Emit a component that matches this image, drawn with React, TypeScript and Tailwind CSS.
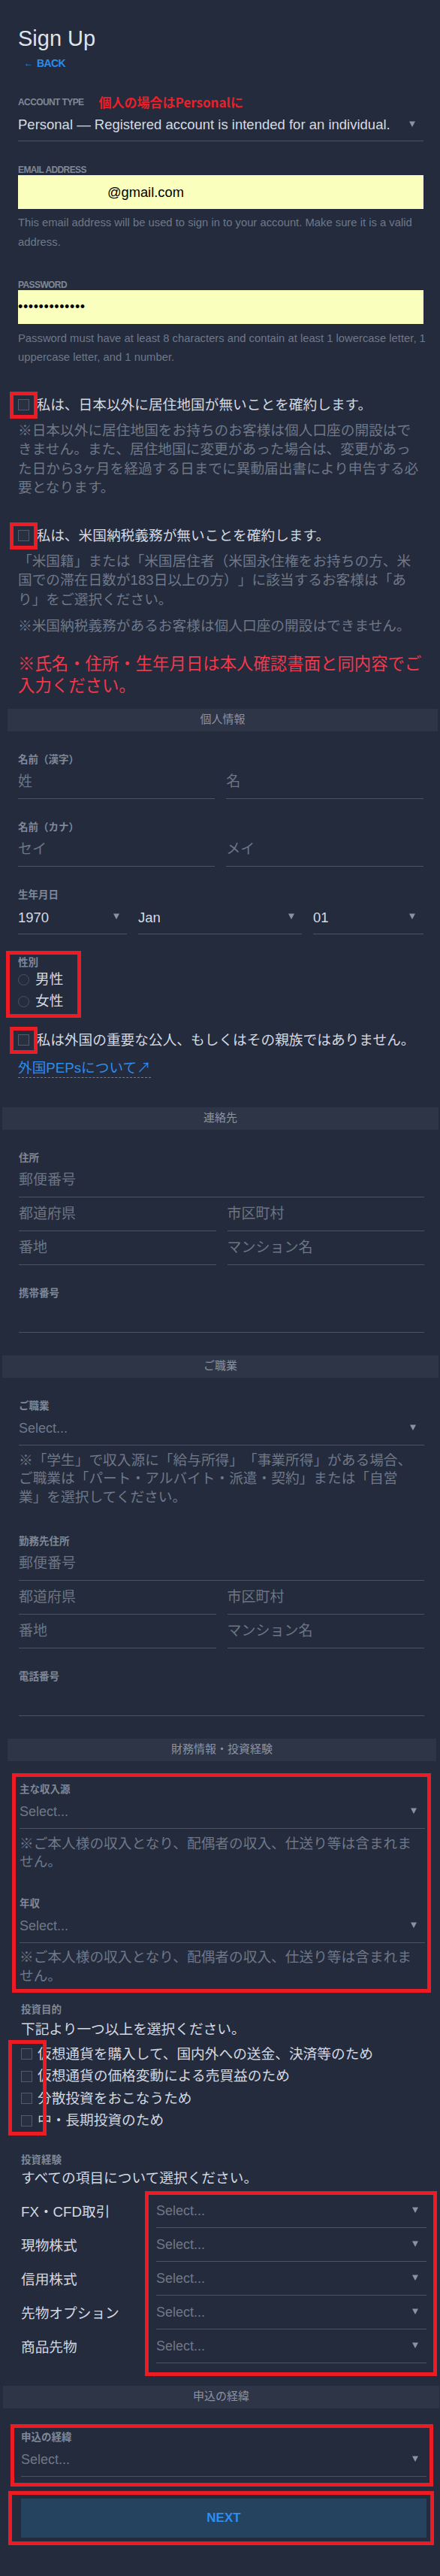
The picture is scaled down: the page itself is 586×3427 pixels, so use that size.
import React from 'react';

// caret used by every select
function Caret() {
  return (
    <svg width="8" height="8" viewBox="0 0 8 8" className="mb-[3px] shrink-0">
      <path d="M0 0.5H8L4 8Z" fill="#8a93a3" />
    </svg>
  );
}

function Label({ children, className = '' }: { children: React.ReactNode; className?: string }) {
  return <div className={`h-4 leading-4 text-[13.5px] font-bold text-[#7f8898] ${className}`}>{children}</div>;
}

function Line({ children, className = '' }: { children?: React.ReactNode; className?: string }) {
  return (
    <div className={`h-10 flex items-center justify-between border-b border-[#4a5263] pb-[3px] ${className}`}>
      {children}
    </div>
  );
}

function Ph({ children }: { children: React.ReactNode }) {
  return <span className="text-[19px] text-[#6c7585]">{children}</span>;
}

function Select({ value, className = 'pr-[11px]' }: { value?: string; className?: string }) {
  return (
    <Line className={className}>
      <span className={value ? 'text-[18.5px] text-[#d6dbe3] whitespace-nowrap' : 'text-[18px] text-[#6f7889]'}>
        {value ?? 'Select...'}
      </span>
      <Caret />
    </Line>
  );
}

function Box({ marked }: { marked?: boolean }) {
  return (
    <span className="relative w-[15px] h-[15px] shrink-0 border border-[#535b6b] bg-[#283041]">
      {marked && (
        <span className="absolute -left-[12px] -top-[11px] w-[37px] h-[36px] border-[5px] border-[#ed1c24]" />
      )}
    </span>
  );
}

function CheckRow({ children, className = '' }: { children: React.ReactNode; className?: string }) {
  return (
    <div className={`h-[26px] flex items-center ${className}`}>
      <Box marked />
      <span className="ml-[9.5px] text-[18.7px] leading-[26px] text-[#d4d9e1] whitespace-nowrap">{children}</span>
    </div>
  );
}

function Radio({ children }: { children: React.ReactNode }) {
  return (
    <div className="h-[29px] flex items-center">
      <span className="w-[15px] h-[15px] rounded-full border-[1.5px] border-[#4b5363] bg-[#252d3d]" />
      <span className="ml-[8px] text-[18.7px] text-[#d4d9e1]">{children}</span>
    </div>
  );
}

function Bar({ children, className = '' }: { children: React.ReactNode; className?: string }) {
  return (
    <div className={`h-[30px] flex items-center justify-center bg-[#2d3546] text-[15px] text-[#8a93a3] ${className}`}>
      {children}
    </div>
  );
}

function Address() {
  return (
    <>
      <Line className="mt-[4px]">
        <Ph>郵便番号</Ph>
      </Line>
      <div className="mt-[5px] grid grid-cols-2 gap-x-[15px]">
        <Line><Ph>都道府県</Ph></Line>
        <Line><Ph>市区町村</Ph></Line>
      </div>
      <div className="mt-[5px] grid grid-cols-2 gap-x-[15px]">
        <Line><Ph>番地</Ph></Line>
        <Line><Ph>マンション名</Ph></Line>
      </div>
    </>
  );
}

const experience = ['FX・CFD取引', '現物株式', '信用株式', '先物オプション', '商品先物'];

const purposes = [
  '仮想通貨を購入して、国内外への送金、決済等のため',
  '仮想通貨の価格変動による売買益のため',
  '分散投資をおこなうため',
  '中・長期投資のため',
];

export default function App() {
  return (
    <div className="w-full h-[3427px] overflow-hidden bg-[#232b3c] flex flex-col pt-[33px] font-['Liberation_Sans','Noto_Sans_CJK_JP',sans-serif] [text-spacing-trim:space-all]">
      {/* account */}
      <section className="flex flex-col pl-[24px] pr-[22.5px]">
        <h1 className="h-[36px] leading-[36px] text-[29px] text-[#dfe3ea]">Sign Up</h1>
        <div className="mt-[5px] h-[20px] flex items-center pl-[8px] text-[#2d8ceb]">
          <span className="text-[12px]">←</span>
          <span className="ml-[5px] text-[14px] font-bold tracking-[-0.6px]">BACK</span>
        </div>

        <div className="mt-[30px] h-[24px] flex items-center gap-[20px]">
          <span className="text-[12px] font-bold tracking-[-0.6px] text-[#7f8898]">ACCOUNT TYPE</span>
          <span className="text-[17px] font-bold text-[#e8202a] font-['Noto_Sans_CJK_JP',sans-serif]">
            個人の場合はPersonalに
          </span>
        </div>
        <Select value="Personal — Registered account is intended for an individual." />

        <div className="mt-[31px] h-[14px] leading-[14px] text-[12px] font-bold tracking-[-0.6px] text-[#7f8898]">
          EMAIL ADDRESS
        </div>
        <div className="h-[45px] flex items-center pl-[119px] bg-[#faffbd] text-[18.3px] text-black">@gmail.com</div>
        <p className="mt-[6px] text-[14.8px] leading-[25.5px] text-[#6f7889] whitespace-nowrap">
          This email address will be used to sign in to your account. Make sure it is a valid
          <br />
          address.
        </p>

        <div className="mt-[38px] h-[13px] leading-[13px] text-[12px] font-bold tracking-[-0.6px] text-[#7f8898]">
          PASSWORD
        </div>
        <div className="h-[45px] flex items-center bg-[#faffbd] text-[18px] tracking-[0.6px] text-black">
          •••••••••••••
        </div>
        <p className="mt-[6.5px] text-[14.8px] leading-[25.5px] text-[#6f7889] whitespace-nowrap">
          Password must have at least 8 characters and contain at least 1 lowercase letter, 1
          <br />
          uppercase letter, and 1 number.
        </p>

        <CheckRow className="mt-[37px]">私は、日本以外に居住地国が無いことを確約します。</CheckRow>
        <p className="mt-[8px] text-[18.7px] leading-[25.5px] text-[#6f7889] whitespace-nowrap">
          ※日本以外に居住地国をお持ちのお客様は個人口座の開設はで
          <br />
          きません。また、居住地国に変更があった場合は、変更があっ
          <br />
          た日から3ヶ月を経過する日までに異動届出書により申告する必
          <br />
          要となります。
        </p>

        <CheckRow className="mt-[38px]">私は、米国納税義務が無いことを確約します。</CheckRow>
        <p className="mt-[8px] text-[18.7px] leading-[25.5px] text-[#6f7889] whitespace-nowrap">
          「米国籍」または「米国居住者（米国永住権をお持ちの方、米
          <br />
          国での滞在日数が183日以上の方）」に該当するお客様は「あ
          <br />
          り」をご選択ください。
        </p>
        <p className="mt-[10px] text-[18.7px] leading-[25.5px] text-[#6f7889] whitespace-nowrap">
          ※米国納税義務があるお客様は個人口座の開設はできません。
        </p>

        <p className="mt-[23px] text-[22.4px] leading-[29px] text-[#f2384b] whitespace-nowrap">
          ※氏名・住所・生年月日は本人確認書面と同内容でご
          <br />
          入力ください。
        </p>
      </section>

      <Bar className="mt-[16px] ml-[10px] mr-[3px]">個人情報</Bar>

      {/* personal */}
      <section className="flex flex-col pl-[24px] pr-[22.5px]">
        <Label className="mt-[30px]">名前（漢字）</Label>
        <div className="mt-[4px] grid grid-cols-2 gap-x-[15px]">
          <Line><Ph>姓</Ph></Line>
          <Line><Ph>名</Ph></Line>
        </div>

        <Label className="mt-[30px]">名前（カナ）</Label>
        <div className="mt-[4px] grid grid-cols-2 gap-x-[15px]">
          <Line><Ph>セイ</Ph></Line>
          <Line><Ph>メイ</Ph></Line>
        </div>

        <Label className="mt-[30px]">生年月日</Label>
        <div className="mt-[4px] grid grid-cols-[145px_218px_1fr] gap-x-[15px]">
          <Select value="1970" className="pr-[10px]" />
          <Select value="Jan" className="pr-[10px]" />
          <Select value="01" className="pr-[11px]" />
        </div>

        <div className="relative mt-[30px] flex flex-col">
          <Label>性別</Label>
          <Radio>男性</Radio>
          <Radio>女性</Radio>
          <span className="absolute -left-[16.5px] -top-[8px] w-[100px] h-[89px] border-[5px] border-[#ed1c24]" />
        </div>

        <CheckRow className="mt-[24px]">私は外国の重要な公人、もしくはその親族ではありません。</CheckRow>
        <div className="mt-[11px] h-[26px] flex">
          <a className="h-[26px] leading-[25px] border-b border-dashed border-[#2d8ceb] text-[18.7px] text-[#2d8ceb]">
            外国PEPsについて↗
          </a>
        </div>
      </section>

      <Bar className="mt-[39px] ml-[3px] mr-[2px]">連絡先</Bar>

      {/* contact */}
      <section className="flex flex-col pl-[25px] pr-[21px]">
        <Label className="mt-[30px]">住所</Label>
        <Address />
        <Label className="mt-[30px]">携帯番号</Label>
        <Line className="mt-[4px]" />
      </section>

      <Bar className="mt-[30px] ml-[3px] mr-[2px]">ご職業</Bar>

      {/* occupation */}
      <section className="flex flex-col pl-[25px] pr-[21px]">
        <Label className="mt-[30px]">ご職業</Label>
        <Select className="mt-[4px] pr-[11px]" />
        <p className="mt-[8px] text-[18.7px] leading-[24.5px] text-[#6f7889] whitespace-nowrap">
          ※「学生」で収入源に「給与所得」「事業所得」がある場合、
          <br />
          ご職業は「パート・アルバイト・派遣・契約」または「自営
          <br />
          業」を選択してください。
        </p>

        <Label className="mt-[38.5px]">勤務先住所</Label>
        <Address />
        <Label className="mt-[30px]">電話番号</Label>
        <Line className="mt-[4px]" />
      </section>

      <Bar className="mt-[30px] ml-[10px] mr-[5px]">財務情報・投資経験</Bar>

      {/* finance */}
      <section className="flex flex-col">
        <div className="relative mt-[30px] ml-[26px] mr-[20.5px] flex flex-col">
          <Label>主な収入源</Label>
          <Select className="mt-[4px] pr-[11px]" />
          <p className="mt-[8px] text-[18.7px] leading-[24.5px] text-[#6f7889] whitespace-nowrap">
            ※ご本人様の収入となり、配偶者の収入、仕送り等は含まれま
            <br />
            せん。
          </p>
          <Label className="mt-[35px]">年収</Label>
          <Select className="mt-[4px] pr-[11px]" />
          <p className="mt-[6px] text-[18.7px] leading-[25px] text-[#6f7889] whitespace-nowrap">
            ※ご本人様の収入となり、配偶者の収入、仕送り等は含まれま
            <br />
            せん。
          </p>
          <span className="absolute -left-[10px] -right-[8.5px] -top-[14px] -bottom-[10px] border-[5px] border-[#ed1c24]" />
        </div>

        <div className="flex flex-col pl-[28px] pr-[18px]">
          <Label className="mt-[25px]">投資目的</Label>
          <div className="mt-[5px] h-[26px] leading-[26px] text-[18.7px] text-[#d4d9e1]">
            下記より一つ以上を選択ください。
          </div>
          <div className="relative mt-[5.5px] flex flex-col">
            {purposes.map((p) => (
              <div key={p} className="h-[29.5px] flex items-center">
                <Box />
                <span className="ml-[7px] text-[18.7px] text-[#d4d9e1] whitespace-nowrap">{p}</span>
              </div>
            ))}
            <span className="absolute -left-[17px] -top-[4.5px] w-[51px] h-[127px] border-[5px] border-[#ed1c24]" />
          </div>

          <Label className="mt-[29.5px]">投資経験</Label>
          <div className="mt-[3px] h-[26px] leading-[26px] text-[18.7px] text-[#d4d9e1]">
            すべての項目について選択ください。
          </div>
          <div className="relative mt-[13px] flex flex-col gap-[5px]">
            {experience.map((e) => (
              <div key={e} className="grid grid-cols-[165px_1fr] gap-x-[15px]">
                <div className="h-10 flex items-center pb-[1px] text-[18.7px] text-[#d4d9e1] whitespace-nowrap">{e}</div>
                <Select className="pr-[11px]" />
              </div>
            ))}
            <span className="absolute left-[165px] -right-[14px] -top-[9px] -bottom-[17px] border-[5px] border-[#ed1c24]" />
          </div>
        </div>
      </section>

      <Bar className="mt-[30px] ml-[4px] mr-[1px]">申込の経緯</Bar>

      {/* referral */}
      <section className="flex flex-col pl-[28px] pr-[18px]">
        <div className="relative mt-[31px] flex flex-col">
          <Label>申込の経緯</Label>
          <Select className="mt-[4px] pr-[11px]" />
          <span className="absolute -left-[14px] -right-[9px] -top-[10px] -bottom-[13px] border-[5px] border-[#ed1c24]" />
        </div>
        <div className="relative mt-[29px]">
          <button className="w-full h-[52px] flex items-center justify-center bg-[#25425f] text-[17px] font-bold text-[#2d8ef0]">
            NEXT
          </button>
          <span className="absolute -left-[17px] -right-[10px] -top-[10px] -bottom-[10px] border-[5px] border-[#ed1c24]" />
        </div>
      </section>
    </div>
  );
}
